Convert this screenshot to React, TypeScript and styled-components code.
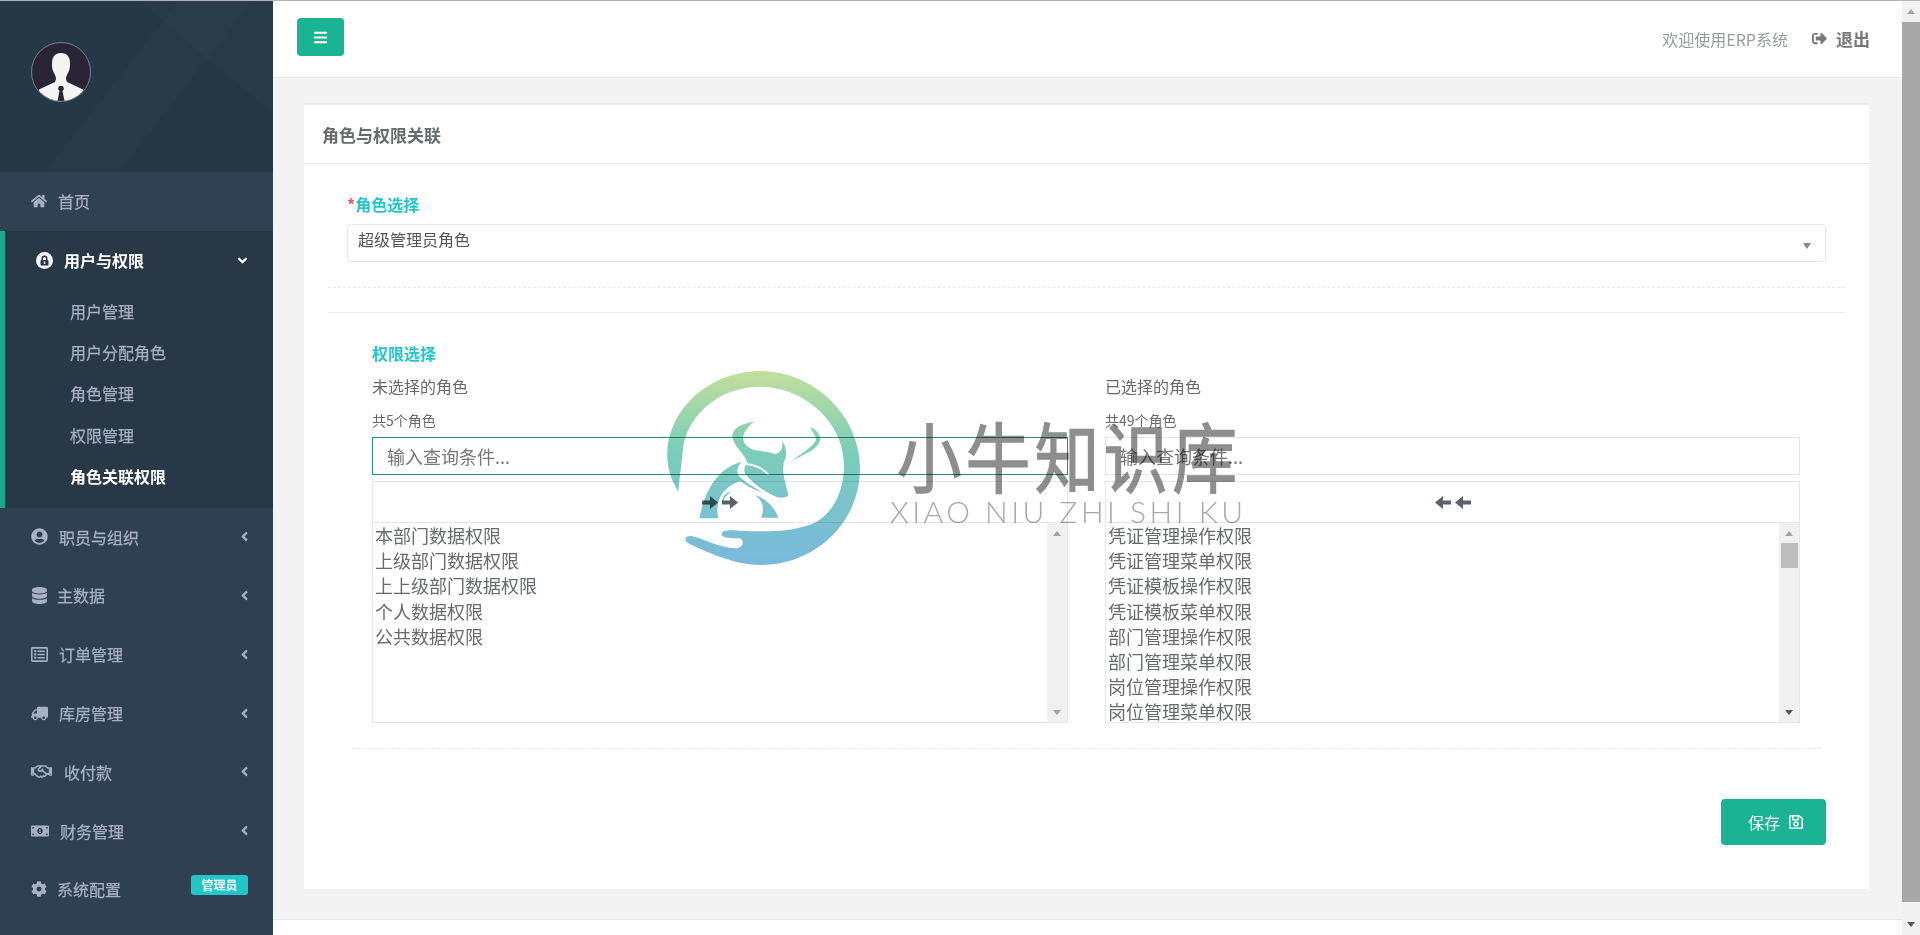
import React from 'react';
import styled, { createGlobalStyle } from 'styled-components';
import {
	FaAngleDown,
	FaAngleLeft,
	FaBars,
	FaCog,
	FaDatabase,
	FaHome,
	FaMoneyBillAlt,
	FaRegHandshake,
	FaRegListAlt,
	FaRegSave,
	FaSignOutAlt,
	FaTruck,
	FaUserCircle,
} from 'react-icons/fa';

const GlobalStyle = createGlobalStyle`
	* {
		box-sizing: border-box;
	}
	html, body {
		margin: 0;
		padding: 0;
		height: 100%;
		overflow: hidden;
	}
	body {
		font-family: "Noto Sans CJK SC", "Liberation Sans", sans-serif;
		color: #676a6c;
		background: #f3f3f4;
	}
`;

const Page = styled.div`
	position: relative;
	display: flex;
	height: 935px;
	border-top: 1px solid #b5b5b5;
	overflow: hidden;
`;

const Sidebar = styled.aside`
	width: 273px;
	flex: none;
	display: flex;
	flex-direction: column;
	background: #2f4050;
`;

const Profile = styled.div`
	height: 171px;
	padding: 41px 0 0 31px;
	background:
		linear-gradient(128deg, transparent 0 44%, rgba(255, 255, 255, 0.012) 44% 62%, transparent 62%),
		linear-gradient(40deg, transparent 0 72%, rgba(255, 255, 255, 0.012) 72%),
		#263746;
`;

const NavRow = styled.div<{ $bg?: string }>`
	display: flex;
	align-items: center;
	height: 58.8px;
	padding: 0 21px 1px 31px;
	font-size: 16px;
	color: #a7b1c2;
	background: ${(props) => props.$bg || 'transparent'};
`;

const NavIconSlot = styled.span<{ $width: number; $flip?: boolean }>`
	flex: none;
	display: flex;
	align-items: center;
	width: ${(props) => props.$width}px;
	font-size: 16px;
	color: #a7b1c2;
	svg {
		transform: ${(props) => (props.$flip ? 'scaleX(-1)' : 'none')};
	}
`;

const NavLabel = styled.span`
	flex: 1;
	-webkit-text-stroke: 0.25px #a7b1c2;
`;

const NavArrow = styled.span`
	display: flex;
	font-size: 15px;
	color: #a7b1c2;
`;

const Badge = styled.span`
	height: 20px;
	width: 57px;
	margin-top: -8px;
	margin-right: 4px;
	border-radius: 3px;
	background: #23c6c8;
	color: #fff;
	font-size: 12px;
	font-weight: 700;
	line-height: 20px;
	text-align: center;
`;

const ActiveGroup = styled.div`
	height: 277px;
	border-left: 5px solid #19aa8d;
	background: #293846;
`;

const ActiveHead = styled.div`
	display: flex;
	align-items: center;
	justify-content: space-between;
	height: 62px;
	padding: 0 23px 3px 31px;
	font-size: 16px;
	font-weight: 700;
	color: #fff;
`;

const ActiveLabel = styled.span`
	flex: 1;
`;

const ActiveArrow = styled.span`
	display: flex;
	font-size: 15px;
	color: #fff;
`;

const SubItem = styled.div<{ $active?: boolean }>`
	height: 41.3px;
	padding-left: 65px;
	font-size: 16px;
	line-height: 36px;
	font-weight: ${(props) => (props.$active ? 700 : 400)};
	color: ${(props) => (props.$active ? '#fff' : '#a7b1c2')};
	-webkit-text-stroke: ${(props) => (props.$active ? '0' : '0.25px #a7b1c2')};
`;

const Main = styled.main`
	flex: 1;
	min-width: 0;
	display: flex;
	flex-direction: column;
`;

const Topbar = styled.header`
	flex: none;
	display: flex;
	align-items: center;
	justify-content: space-between;
	height: 77px;
	padding: 0 32px 3px 24px;
	background: #fff;
	border-bottom: 1px solid #e7eaec;
`;

const MenuButton = styled.button`
	display: flex;
	align-items: center;
	justify-content: center;
	width: 47px;
	height: 38px;
	margin-top: -1px;
	padding: 0;
	border: 0;
	border-radius: 4px;
	background: #1ab394;
	color: #fff;
	font-size: 15px;
`;

const TopRight = styled.div`
	display: flex;
	align-items: center;
	margin-top: 2px;
`;

const Welcome = styled.span`
	font-size: 16px;
	color: #999c9e;
`;

const Logout = styled.span`
	display: flex;
	align-items: center;
	gap: 9px;
	margin-left: 24px;
	font-size: 17px;
	font-weight: 700;
	color: #777;
`;

const Content = styled.div`
	flex: 1;
	padding: 25px 33px 0 31px;
`;

const Card = styled.section`
	height: 786px;
	background: #fff;
	border-top: 2px solid #e7eaec;
`;

const CardTitle = styled.h5`
	height: 59px;
	margin: 0;
	padding: 0 18px;
	font-size: 17px;
	font-weight: 700;
	line-height: 60px;
	color: #676a6c;
	border-bottom: 1px solid #e7eaec;
`;

const RoleBlock = styled.div`
	padding: 28px 43px 0;
`;

const FieldLabel = styled.div`
	height: 24px;
	font-size: 16px;
	font-weight: 700;
	line-height: 24px;
	color: #23c6c8;
`;

const Star = styled.span`
	color: #ed5565;
`;

const Select = styled.div`
	position: relative;
	height: 38px;
	margin-top: 8px;
	padding: 0 10px;
	border: 1px solid #e5e6e7;
	border-radius: 4px;
	font-size: 16px;
	line-height: 28px;
	color: #555;
`;

const SelectCaret = styled.span`
	position: absolute;
	top: 18px;
	right: 14px;
	border-top: 6px solid #888;
	border-left: 4px solid transparent;
	border-right: 4px solid transparent;
`;

const Rule = styled.hr<{ $dashed?: boolean; $inset: number; $top: number }>`
	height: 0;
	margin: ${(props) => props.$top}px ${(props) => props.$inset}px 0;
	border: 0;
	border-top: 1px ${(props) => (props.$dashed ? 'dashed' : 'solid')} #e7eaec;
`;

const PermBlock = styled.div`
	padding: 28px 69px 0 68px;
`;

const Columns = styled.div`
	display: grid;
	grid-template-columns: 696px 695px;
	column-gap: 37px;
	margin-top: 9px;
`;

const ColumnTitle = styled.div`
	height: 24px;
	font-size: 16px;
	line-height: 24px;
	color: #676a6c;
`;

const ColumnCount = styled.div`
	height: 20px;
	margin-top: 12px;
	font-size: 14px;
	line-height: 20px;
	color: #676a6c;
`;

const FilterInput = styled.input<{ $focused?: boolean }>`
	display: block;
	width: 100%;
	height: 38px;
	margin-top: 7px;
	padding: 0 14px;
	border: 1px solid ${(props) => (props.$focused ? '#2a8f80' : '#e5e6e7')};
	outline: 0;
	font-family: inherit;
	font-size: 18px;
	background: transparent;
	&::placeholder {
		color: #777;
		opacity: 1;
	}
`;

const MoveButton = styled.div`
	display: flex;
	align-items: center;
	justify-content: center;
	gap: 4px;
	height: 41px;
	margin-top: 6px;
	border: 1px solid #e5e6e7;
	border-bottom: 0;
	color: #5b6168;
`;

const ListBox = styled.div`
	display: flex;
	height: 201px;
	border: 1px solid #e5e6e7;
`;

const ListItems = styled.div`
	flex: 1;
	padding: 0 2px;
	overflow: hidden;
	font-size: 18px;
	line-height: 25px;
	color: #676a6c;
`;

const ListItem = styled.div`
	height: 25.2px;
	white-space: nowrap;
`;

const ScrollTrack = styled.div<{ $width: number }>`
	flex: none;
	display: flex;
	flex-direction: column;
	align-items: center;
	width: ${(props) => props.$width}px;
	background: #f0f0f0;
`;

const ScrollArrow = styled.div<{ $down?: boolean; $dark?: boolean; $size: number }>`
	flex: none;
	display: flex;
	align-items: center;
	justify-content: center;
	width: 100%;
	height: ${(props) => props.$size}px;
	margin-top: ${(props) => (props.$down ? 'auto' : 0)};
	&::after {
		content: '';
		border-left: 4px solid transparent;
		border-right: 4px solid transparent;
		border-${(props) => (props.$down ? 'top' : 'bottom')}: 5px solid ${(props) => (props.$dark ? '#555' : '#a3a3a3')};
	}
`;

const ScrollThumb = styled.div<{ $color: string; $height: number; $full?: boolean }>`
	flex: none;
	width: ${(props) => (props.$full ? '100%' : 'calc(100% - 3px)')};
	height: ${(props) => props.$height}px;
	background: ${(props) => props.$color};
`;

const SaveRow = styled.div`
	display: flex;
	justify-content: flex-end;
	padding: 50px 43px 0 0;
`;

const SaveButton = styled.button`
	display: flex;
	align-items: center;
	justify-content: center;
	gap: 8px;
	width: 105px;
	height: 46px;
	padding: 0 0 0 5px;
	border: 0;
	border-radius: 4px;
	background: #1ab394;
	color: #fff;
	font-family: inherit;
	font-size: 16px;
`;

const Footer = styled.footer`
	flex: none;
	height: 16px;
	background: #fff;
	border-top: 1px solid #e7eaec;
`;

const PageScroll = styled.div`
	flex: none;
	display: flex;
	flex-direction: column;
	width: 18px;
	background: #f1f1f1;
`;

const Watermark = styled.div`
	position: absolute;
	left: 660px;
	top: 364px;
	width: 600px;
	height: 210px;
	mix-blend-mode: multiply;
	pointer-events: none;
`;

const WatermarkText = styled.div`
	position: absolute;
	left: 232px;
	top: 43px;
	width: 370px;
`;

const WatermarkName = styled.div`
	margin-left: 5px;
	font-size: 76px;
	line-height: 92px;
	color: #8e8e8e;
	white-space: nowrap;
	letter-spacing: 5px;
	-webkit-text-stroke: 1.5px #8e8e8e;
	transform: scaleX(0.85);
	transform-origin: left center;
`;

const WatermarkPinyin = styled.div`
	margin: -6px 0 0 -2px;
	font-family: Lato, "Liberation Sans", sans-serif;
	font-size: 30px;
	font-weight: 300;
	line-height: 34px;
	letter-spacing: 3.5px;
	color: #a8a8a8;
	white-space: nowrap;
`;

const Avatar = () => (
	<svg width="60" height="60" viewBox="0 0 60 60">
		<defs>
			<clipPath id="avatar-clip">
				<circle cx="30" cy="30" r="29" />
			</clipPath>
		</defs>
		<circle cx="30" cy="30" r="29.5" fill="#2a2536" stroke="#77808a" strokeWidth="1" />
		<g clipPath="url(#avatar-clip)">
			<path
				d="M30 11c-6 0-9 4-9 10 0 3 0 6 1.500 9 1 2 2.500 4 2.500 7l-1 3-15 7c-2 1-3 4-3 14h48c0-10-1-13-3-14l-15-7-1-3c0-3 1.500-5 2.500-7 1.500-3 1.500-6 1.500-9 0-6-3-10-9-10z"
				fill="#f5f5f3"
			/>
			<path d="M28 44h4l1 3-1.500 2 2 10h-7l2-10-1.500-2z" fill="#2a2536" />
		</g>
	</svg>
);

const LockBadge = () => (
	<svg width="17" height="17" viewBox="0 0 17 17">
		<circle cx="8.500" cy="8.500" r="8.500" fill="#f2f4f5" />
		<path d="M5.500 8V6.500a3 3 0 0 1 6 0V8h-1.500V6.500a1.500 1.500 0 0 0-3 0V8z" fill="#293846" />
		<rect x="4.500" y="8" width="8" height="5.500" rx="1" fill="#293846" />
		<rect x="7.800" y="9.500" width="1.400" height="2.500" fill="#f2f4f5" />
	</svg>
);

// fat FA4 style arrow, the FA5 one in react-icons is too thin
const FatArrow = ({ left }: { left?: boolean }) => (
	<svg width="16" height="13" viewBox="0 0 16 13" style={{ transform: left ? 'scaleX(-1)' : 'none' }}>
		<path d="M0 4.500h8V0l8 6.500-8 6.500V8.500H0z" fill="currentColor" />
	</svg>
);

const BullLogo = () => (
	<svg width="210" height="210" viewBox="0 0 630 630">
		<defs>
			<linearGradient id="logo-fill" x1="0" y1="18" x2="0" y2="600" gradientUnits="userSpaceOnUse">
				<stop offset="0" stopColor="#c2df9b" />
				<stop offset="0.4" stopColor="#7ccdb9" />
				<stop offset="1" stopColor="#79b9dd" />
			</linearGradient>
		</defs>
		<g fill="url(#logo-fill)">
			<path d="M55 380C30 340 20 300 22 260C30 120 160 18 300 18C460 18 600 150 600 310C600 470 470 600 300 600C230 600 160 570 90 538C70 528 72 510 95 513C130 522 180 548 225 550C245 550 258 530 240 520C215 520 185 520 185 508C185 495 210 495 240 497C300 500 400 505 470 470C520 440 552 380 552 300C552 170 430 65 300 65C170 65 75 160 68 260C65 300 58 340 55 380Z" />
			<path d="M282 170C245 175 215 190 217 215C220 245 260 270 262 295C252 305 250 320 258 330C285 360 320 385 350 396C365 400 385 398 385 388C375 350 365 320 372 290C382 270 380 245 366 227C370 250 362 265 345 268C320 255 290 262 268 248C245 235 238 205 282 170Z" />
			<path d="M452 186C470 195 485 210 480 228C470 255 430 270 395 287C425 265 460 245 468 225C470 210 452 200 452 186Z" />
			<path d="M245 290C190 305 140 350 118 460L175 460C165 420 180 380 215 360C235 350 240 345 250 355C270 370 290 375 310 385C290 370 250 350 235 330C228 315 235 300 245 290Z" />
			<path d="M218 376C195 385 185 395 187 415C195 395 205 385 218 376Z" />
			<path d="M285 390C320 400 345 430 355 458L303 458C315 430 310 410 285 390Z" />
		</g>
		<path d="M258 297C285 298 312 312 326 330" fill="none" stroke="#fff" strokeWidth="6" />
	</svg>
);

const navItems = [
	{ label: '职员与组织', icon: <FaUserCircle size={17} />, slot: 28 },
	{ label: '主数据', icon: <FaDatabase size={17} />, slot: 26 },
	{ label: '订单管理', icon: <FaRegListAlt size={17} />, slot: 28 },
	{ label: '库房管理', icon: <FaTruck size={17} />, slot: 28, flip: true },
	{ label: '收付款', icon: <FaRegHandshake size={21} />, slot: 33 },
	{ label: '财务管理', icon: <FaMoneyBillAlt size={18} />, slot: 29 },
];

const subItems = ['用户管理', '用户分配角色', '角色管理', '权限管理', '角色关联权限'];
const unselected = ['本部门数据权限', '上级部门数据权限', '上上级部门数据权限', '个人数据权限', '公共数据权限'];
const selected = [
	'凭证管理操作权限',
	'凭证管理菜单权限',
	'凭证模板操作权限',
	'凭证模板菜单权限',
	'部门管理操作权限',
	'部门管理菜单权限',
	'岗位管理操作权限',
	'岗位管理菜单权限',
];

const App = () => (
	<>
		<GlobalStyle />
		<Page>
			<Sidebar>
				<Profile>
					<Avatar />
				</Profile>
				<NavRow $bg="#304151">
					<NavIconSlot $width={27}>
						<FaHome />
					</NavIconSlot>
					<NavLabel>首页</NavLabel>
				</NavRow>
				<ActiveGroup>
					<ActiveHead>
						<NavIconSlot $width={28}>
							<LockBadge />
						</NavIconSlot>
						<ActiveLabel>用户与权限</ActiveLabel>
						<ActiveArrow>
							<FaAngleDown />
						</ActiveArrow>
					</ActiveHead>
					{subItems.map((item, i) => (
						<SubItem key={item} $active={i === subItems.length - 1}>
							{item}
						</SubItem>
					))}
				</ActiveGroup>
				{navItems.map((item) => (
					<NavRow key={item.label}>
						<NavIconSlot $width={item.slot} $flip={item.flip}>
							{item.icon}
						</NavIconSlot>
						<NavLabel>{item.label}</NavLabel>
						<NavArrow>
							<FaAngleLeft />
						</NavArrow>
					</NavRow>
				))}
				<NavRow>
					<NavIconSlot $width={26}>
						<FaCog />
					</NavIconSlot>
					<NavLabel>系统配置</NavLabel>
					<Badge>管理员</Badge>
				</NavRow>
			</Sidebar>
			<Main>
				<Topbar>
					<MenuButton>
						<FaBars />
					</MenuButton>
					<TopRight>
						<Welcome>欢迎使用ERP系统</Welcome>
						<Logout>
							<FaSignOutAlt size={15} />
							退出
						</Logout>
					</TopRight>
				</Topbar>
				<Content>
					<Card>
						<CardTitle>角色与权限关联</CardTitle>
						<RoleBlock>
							<FieldLabel>
								<Star>*</Star>角色选择
							</FieldLabel>
							<Select>
								超级管理员角色
								<SelectCaret />
							</Select>
						</RoleBlock>
						<Rule $dashed $inset={24} $top={25} />
						<Rule $inset={24} $top={24} />
						<PermBlock>
							<FieldLabel>权限选择</FieldLabel>
							<Columns>
								<div>
									<ColumnTitle>未选择的角色</ColumnTitle>
									<ColumnCount>共5个角色</ColumnCount>
									<FilterInput $focused placeholder="输入查询条件..." />
									<MoveButton>
										<FatArrow />
										<FatArrow />
									</MoveButton>
									<ListBox>
										<ListItems>
											{unselected.map((item) => (
												<ListItem key={item}>{item}</ListItem>
											))}
										</ListItems>
										<ScrollTrack $width={20}>
											<ScrollArrow $size={20} />
											<ScrollArrow $size={20} $down />
										</ScrollTrack>
									</ListBox>
								</div>
								<div>
									<ColumnTitle>已选择的角色</ColumnTitle>
									<ColumnCount>共49个角色</ColumnCount>
									<FilterInput placeholder="输入查询条件..." />
									<MoveButton>
										<FatArrow left />
										<FatArrow left />
									</MoveButton>
									<ListBox>
										<ListItems>
											{selected.map((item) => (
												<ListItem key={item}>{item}</ListItem>
											))}
										</ListItems>
										<ScrollTrack $width={20}>
											<ScrollArrow $size={20} />
											<ScrollThumb $color="#bdbdbd" $height={25} />
											<ScrollArrow $size={20} $down $dark />
										</ScrollTrack>
									</ListBox>
								</div>
							</Columns>
						</PermBlock>
						<Rule $dashed $inset={48} $top={25} />
						<SaveRow>
							<SaveButton>
								保存
								<FaRegSave size={16} />
							</SaveButton>
						</SaveRow>
					</Card>
				</Content>
				<Footer />
			</Main>
			<PageScroll>
				<ScrollArrow $size={21} />
				<ScrollThumb $color="#a8a8a8" $height={880} $full />
				<ScrollArrow $size={21} $down $dark />
			</PageScroll>
			<Watermark>
				<BullLogo />
				<WatermarkText>
					<WatermarkName>小牛知识库</WatermarkName>
					<WatermarkPinyin>XIAO NIU ZHI SHI KU</WatermarkPinyin>
				</WatermarkText>
			</Watermark>
		</Page>
	</>
);

export default App;
